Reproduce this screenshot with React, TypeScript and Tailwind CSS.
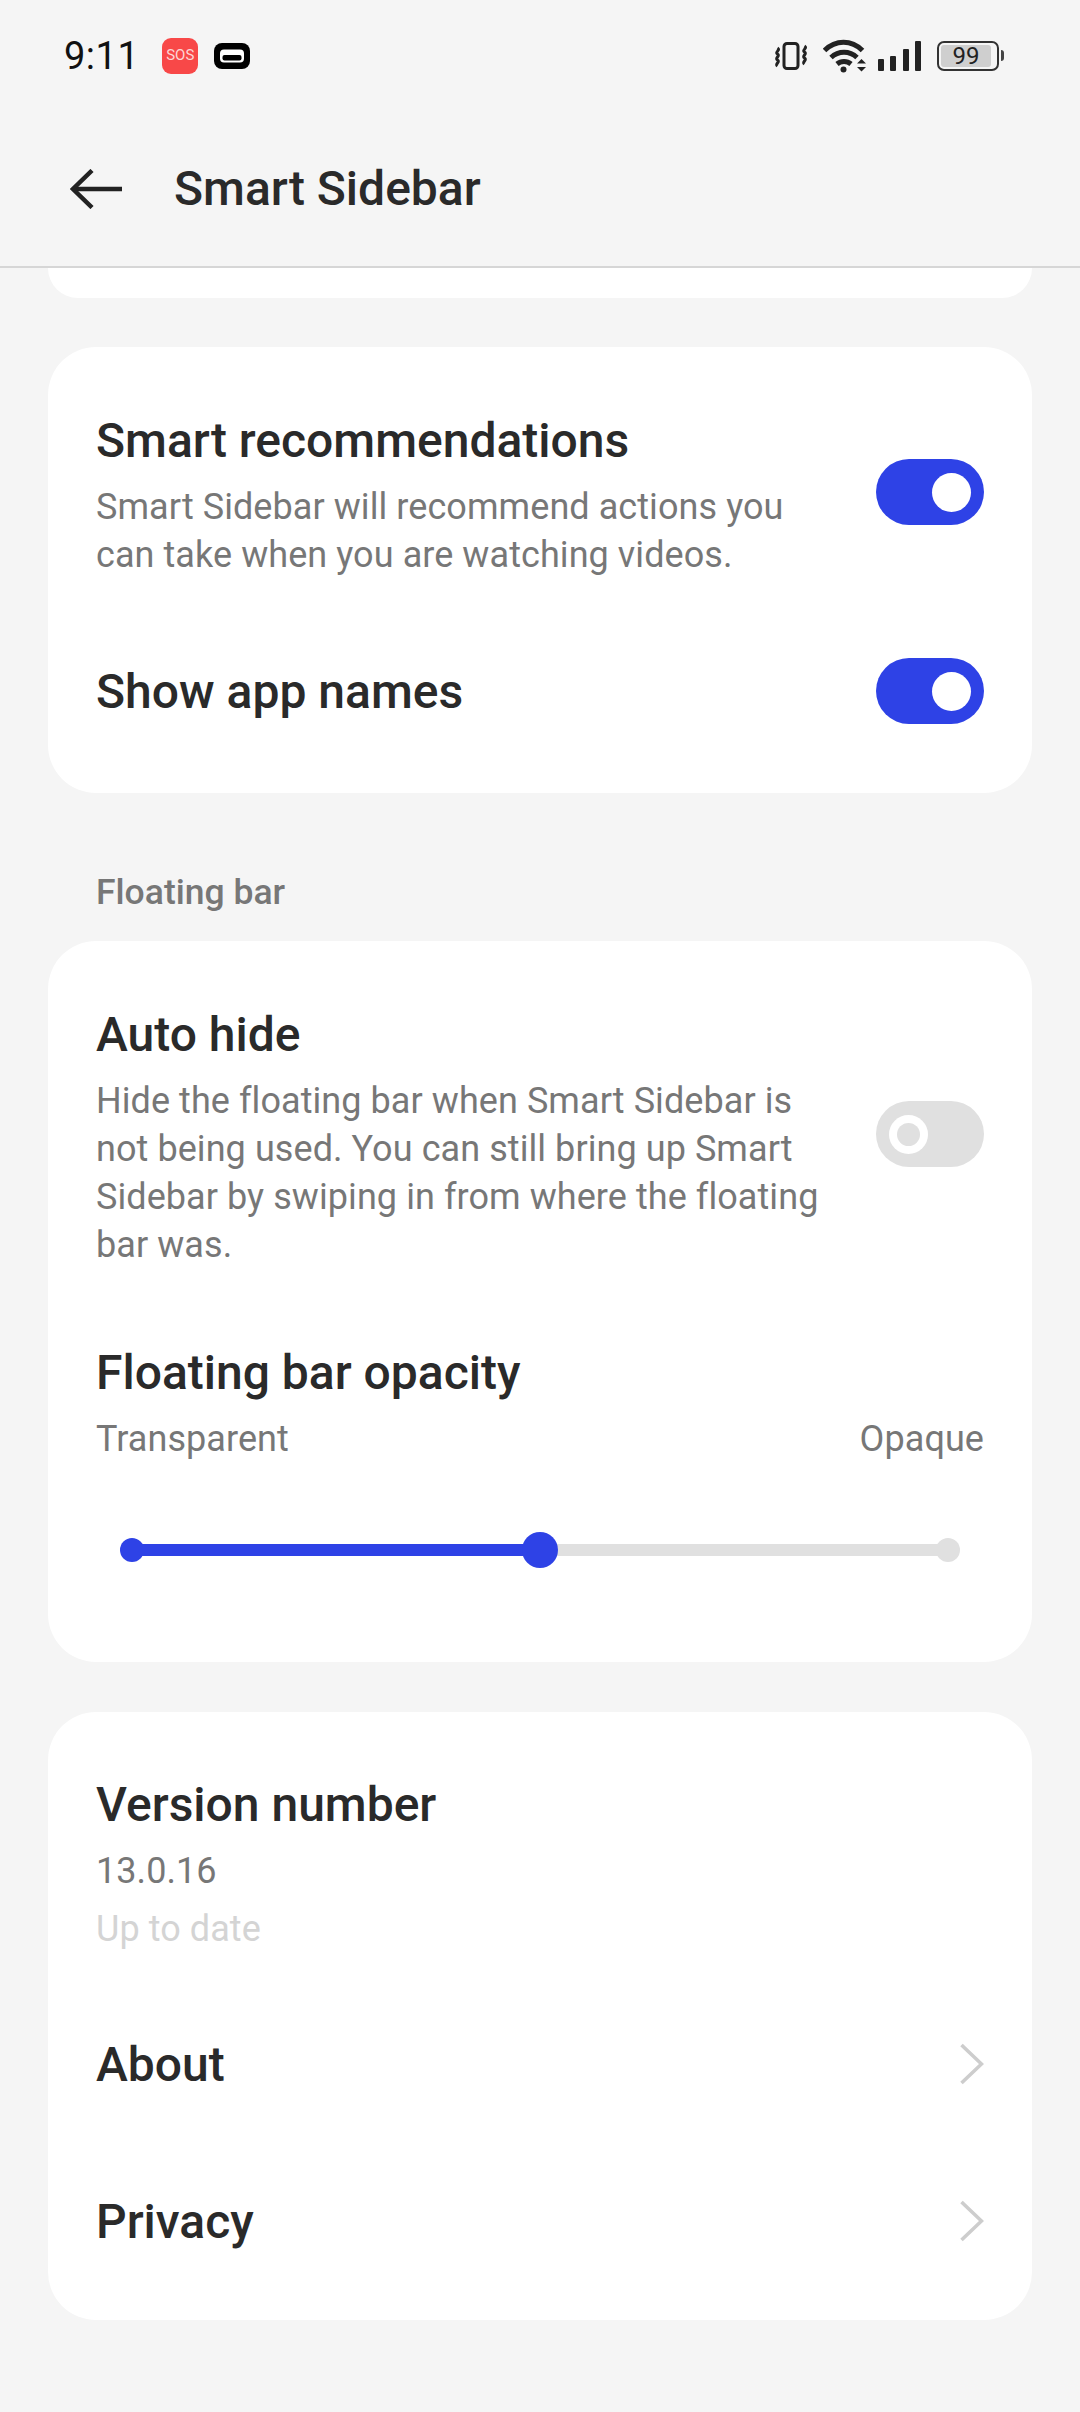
import React from 'react';

function VibrateIcon() {
  return (
    <svg width="34" height="28" viewBox="0 0 34 28" fill="none" stroke="#222" strokeWidth="3">
      <rect x="10" y="1.500" width="14" height="25" rx="3" />
      <path d="M3.500 6c3.500 2 -3 4 0 6s-3 4 0 6s-3 4 0 6" strokeWidth="3" />
      <path d="M30.500 4c3.500 2 -3 4 0 6s-3 4 0 6s-3 4 0 6" strokeWidth="3" />
    </svg>
  );
}

function WifiIcon() {
  return (
    <svg width="44" height="34" viewBox="0 0 44 34" fill="none" stroke="#222" strokeWidth="5">
      <path d="M1.500 11.500c11-11 27-11 38 0" />
      <path d="M8 18.500c7.500-7 18.500-7 26 0" />
      <path d="M14 25c4-3.400 10-3.400 14 0" />
      <circle cx="20.500" cy="30.500" r="3" fill="#222" stroke="none" />
      <path d="M34 24.500l4.500-4.500l4.500 4.500z" fill="#222" stroke="none" />
      <path d="M34 28l4.500 4.500l4.500-4.500z" fill="#222" stroke="none" />
    </svg>
  );
}

function SignalIcon() {
  return (
    <svg width="43" height="30" viewBox="0 0 43 30" fill="#222">
      <rect x="0" y="18" width="6" height="12" rx="1" />
      <rect x="12" y="15" width="6" height="15" rx="1" />
      <rect x="25" y="8" width="6" height="22" rx="1" />
      <rect x="37" y="0" width="6" height="30" rx="1" />
    </svg>
  );
}

function Battery() {
  return (
    <div className="flex items-center">
      <div className="w-[62px] h-[30px] rounded-[7px] border-[2.5px] border-[#333] p-[2px]">
        <div className="w-[50px] h-full rounded-[3px] bg-[#cfcfcf] flex items-center justify-center text-[24px] leading-none text-[#222]">
          99
        </div>
      </div>
      <div className="w-[3px] h-[11px] ml-[2px] bg-[#444] rounded-r-sm" />
    </div>
  );
}

function StatusBar() {
  return (
    <div className="h-[111px] flex items-center pl-[64px] pr-[76px]">
      <span className="text-[38px] leading-none tracking-[0.5px] text-[#111]">9:11</span>
      <div className="ml-[23px] w-[36px] h-[36px] rounded-[9px] bg-[#f84848] flex items-center justify-center text-[15px] leading-none text-[#fcd5d5]">
        SOS
      </div>
      <svg className="ml-[16px]" width="36" height="26" viewBox="0 0 36 26" fill="none">
        <rect x="0" y="0" width="36" height="26" rx="8" fill="#000" />
        <rect x="6" y="6.500" width="24" height="13" rx="4" fill="#fff" />
        <rect x="8.500" y="12" width="19" height="5.500" rx="2" fill="#000" />
      </svg>
      <div className="ml-auto flex items-center">
        <VibrateIcon />
        <div className="ml-[15px]"><WifiIcon /></div>
        <div className="ml-[11px]"><SignalIcon /></div>
        <div className="ml-[16px]"><Battery /></div>
      </div>
    </div>
  );
}

function Toggle({ on, className = '' }: { on: boolean; className?: string }) {
  if (on) {
    return (
      <div className={`shrink-0 w-[108px] h-[66px] rounded-full bg-[#2e42e6] flex items-center justify-end pr-[13px] ${className}`}>
        <div className="w-[39px] h-[39px] rounded-full bg-white" />
      </div>
    );
  }
  return (
    <div className={`shrink-0 w-[108px] h-[66px] rounded-full bg-[#e0e0e0] flex items-center pl-[13px] ${className}`}>
      <div className="w-[39px] h-[39px] rounded-full bg-white flex items-center justify-center">
        <div className="w-[23px] h-[23px] rounded-full bg-[#e0e0e0]" />
      </div>
    </div>
  );
}

function Chevron() {
  return (
    <svg width="24" height="42" viewBox="0 0 24 42" fill="none" stroke="#cdcdcd" strokeWidth="3.600">
      <path d="M1.500 2L21.500 21L1.500 40" />
    </svg>
  );
}

function OpacitySlider() {
  return (
    <div className="mt-[69px] h-[36px] ml-[24px] mr-[24px] flex items-center">
      <div className="w-[24px] h-[24px] rounded-full bg-[#2e42e6]" />
      <div className="flex-1 -mx-[6px] h-[12px] bg-[#2e42e6]" />
      <div className="z-10 w-[36px] h-[36px] rounded-full bg-[#2e42e6]" />
      <div className="flex-1 -mx-[6px] h-[12px] bg-[#e0e0e0]" />
      <div className="w-[24px] h-[24px] rounded-full bg-[#e0e0e0]" />
    </div>
  );
}

export default function App() {
  const title = 'h-[60px] text-[48px] leading-[62px] font-medium text-[#2a2a2a]';
  const desc = 'mt-[13px] -mb-[1px] text-[36px] leading-[48px] tracking-[0.07px] text-[#777]';

  return (
    <div className="min-h-screen h-[2412px] overflow-hidden bg-[#f5f5f5] font-['Roboto',sans-serif]">
      <StatusBar />

      <div className="h-[157px] border-b-2 border-[#d6d6d6] flex items-center pl-[70px]">
        <svg width="52" height="40" viewBox="0 0 52 40" fill="none" stroke="#222" strokeWidth="4.500">
          <path d="M52 20H3" />
          <path d="M22 1.500L3 20L22 38.500" />
        </svg>
        <span className="ml-[52px] text-[48px] font-medium text-[#2a2a2a] leading-none">Smart Sidebar</span>
      </div>

      <div className="mx-[48px] h-[30px] bg-white rounded-b-[48px]" />

      <div className="mx-[48px] mt-[49px] bg-white rounded-[48px] pl-[48px] pr-[48px] pt-[63px] pb-[69px]">
        <div className="flex items-center justify-between">
          <div className="w-[740px]">
            <div className={title}>Smart recommendations</div>
            <div className={desc}>
              Smart Sidebar will recommend actions you
              <br />
              can take when you are watching videos.
            </div>
          </div>
          <Toggle on className="mb-[4px]" />
        </div>
        <div className="mt-[80px] flex items-center justify-between">
          <div className={title}>Show app names</div>
          <Toggle on />
        </div>
      </div>

      <div className="mt-[70px] ml-[96px] h-[60px] flex items-center text-[35.5px] font-medium text-[#777]">
        Floating bar
      </div>

      <div className="mx-[48px] mt-[18px] bg-white rounded-[48px] pl-[48px] pr-[48px] pt-[63px] pb-[94px]">
        <div className="flex items-center justify-between">
          <div className="w-[740px]">
            <div className={title}>Auto hide</div>
            <div className={desc}>
              Hide the floating bar when Smart Sidebar is
              <br />
              not being used. You can still bring up Smart
              <br />
              Sidebar by swiping in from where the floating
              <br />
              bar was.
            </div>
          </div>
          <Toggle on={false} className="mb-[4px]" />
        </div>
        <div className={`mt-[74px] ${title}`}>Floating bar opacity</div>
        <div className="mt-[13px] flex justify-between text-[36px] leading-[48px] tracking-[0.07px] text-[#777]">
          <span>Transparent</span>
          <span>Opaque</span>
        </div>
        <OpacitySlider />
      </div>

      <div className="mx-[48px] mt-[50px] bg-white rounded-[48px] pl-[48px] pr-[48px] pt-[62px] pb-[69px]">
        <div className={title}>Version number</div>
        <div className="mt-[13px] text-[36px] leading-[48px] tracking-[0.07px] text-[#777]">13.0.16</div>
        <div className="mt-[10px] text-[36px] leading-[48px] tracking-[0.07px] text-[#d4d4d4]">Up to date</div>
        <div className="mt-[81px] flex items-center justify-between">
          <div className={title}>About</div>
          <Chevron />
        </div>
        <div className="mt-[97px] flex items-center justify-between">
          <div className={title}>Privacy</div>
          <Chevron />
        </div>
      </div>
    </div>
  );
}
